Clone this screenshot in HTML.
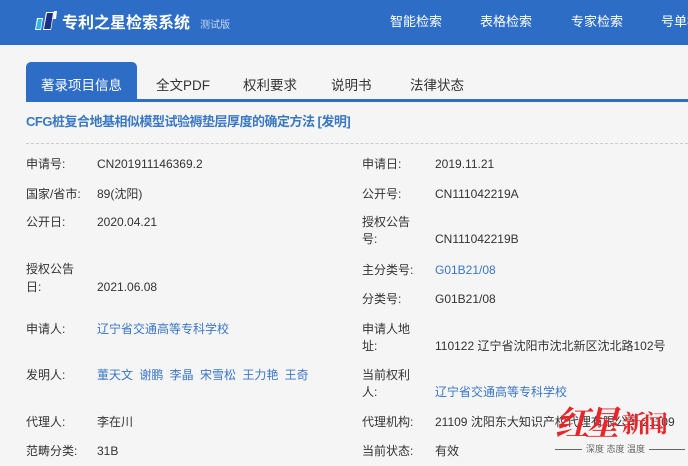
<!DOCTYPE html>
<html><head><meta charset="utf-8"><style>
body{margin:0;width:688px;height:466px;overflow:hidden;background:#f5f5f5;font-family:"Liberation Sans","Noto Sans CJK SC",sans-serif;position:relative;}
.hd{position:absolute;left:0;top:0;width:688px;height:45px;background:#2d6dc6;}
.a{position:absolute;font-size:12px;color:#333;white-space:nowrap;line-height:14px;}
.b{color:#3a76c6;}
.nav{position:absolute;top:11px;color:#fff;font-size:13px;white-space:nowrap;}
.tab{position:absolute;top:74px;font-size:13.5px;color:#333;white-space:nowrap;}
</style></head><body>
<div class="hd"></div>
<svg style="position:absolute;left:34px;top:9px" width="24" height="24" viewBox="0 0 24 24">
<polygon points="3,9 9,9 7,21 1,21" fill="#fff"/><polygon points="4,10 8,10 6.5,20 2,20" fill="#2bb6e8"/>
<polygon points="12,3 20,3 17,21 9,21" fill="#fff"/><polygon points="13,4 19,4 16.5,20 10,20" fill="#1a2f8a"/>
<polygon points="20,2 23,2 22,10 19,10" fill="#fff"/>
</svg>
<div style="position:absolute;left:62px;top:9px;color:#fff;font-size:16px;font-weight:bold;white-space:nowrap;">专利之星检索系统</div>
<div style="position:absolute;left:200px;top:16px;color:#c8d8f0;font-size:10px;">测试版</div>
<div class="nav" style="left:390px">智能检索</div>
<div class="nav" style="left:480px">表格检索</div>
<div class="nav" style="left:571px">专家检索</div>
<div class="nav" style="left:661px">号单检索</div>
<div style="position:absolute;left:26px;top:62px;width:111px;height:38px;background:#2d6dc6;border-radius:5px 5px 0 0;"></div>
<div style="position:absolute;left:26px;top:99px;width:662px;height:3px;background:#2d6dc6;"></div>
<div class="tab" style="left:41px;color:#fff">著录项目信息</div>
<div class="tab" style="left:156px">全文PDF</div>
<div class="tab" style="left:243px">权利要求</div>
<div class="tab" style="left:331px">说明书</div>
<div class="tab" style="left:410px">法律状态</div>
<div style="position:absolute;left:26px;top:111px;font-size:13px;color:#3a78c3;font-weight:bold;letter-spacing:-0.5px;white-space:nowrap">CFG桩复合地基相似模型试验褥垫层厚度的确定方法 [发明]</div>
<div style="position:absolute;left:26px;top:143px;width:662px;border-top:1px dashed #ccc;"></div>

<div class="a" style="left:26px;top:157px">申请号:</div><div class="a" style="left:97px;top:157px">CN201911146369.2</div>
<div class="a" style="left:26px;top:187px">国家/省市:</div><div class="a" style="left:97px;top:187px">89(沈阳)</div>
<div class="a" style="left:26px;top:215px">公开日:</div><div class="a" style="left:97px;top:215px">2020.04.21</div>
<div class="a" style="left:26px;top:262px">授权公告</div><div class="a" style="left:26px;top:280px">日:</div><div class="a" style="left:97px;top:280px">2021.06.08</div>
<div class="a" style="left:26px;top:322px">申请人:</div><div class="a b" style="left:97px;top:322px">辽宁省交通高等专科学校</div>
<div class="a" style="left:26px;top:368px">发明人:</div><div class="a b" style="left:97px;top:368px;word-spacing:3px">董天文 谢鹏 李晶 宋雪松 王力艳 王奇</div>
<div class="a" style="left:26px;top:415px">代理人:</div><div class="a" style="left:97px;top:415px">李在川</div>
<div class="a" style="left:26px;top:444px">范畴分类:</div><div class="a" style="left:97px;top:444px">31B</div>

<div class="a" style="left:362px;top:157px">申请日:</div><div class="a" style="left:435px;top:157px">2019.11.21</div>
<div class="a" style="left:362px;top:187px">公开号:</div><div class="a" style="left:435px;top:187px">CN111042219A</div>
<div class="a" style="left:362px;top:215px">授权公告</div><div class="a" style="left:362px;top:232px">号:</div><div class="a" style="left:435px;top:232px">CN111042219B</div>
<div class="a" style="left:362px;top:263px">主分类号:</div><div class="a b" style="left:435px;top:263px">G01B21/08</div>
<div class="a" style="left:362px;top:292px">分类号:</div><div class="a" style="left:435px;top:292px">G01B21/08</div>
<div class="a" style="left:362px;top:322px">申请人地</div><div class="a" style="left:362px;top:339px">址:</div><div class="a" style="left:435px;top:339px">110122 辽宁省沈阳市沈北新区沈北路102号</div>
<div class="a" style="left:362px;top:368px">当前权利</div><div class="a" style="left:362px;top:385px">人:</div><div class="a b" style="left:435px;top:385px">辽宁省交通高等专科学校</div>
<div class="a" style="left:362px;top:415px">代理机构:</div><div class="a" style="left:435px;top:415px">21109 沈阳东大知识产权代理有限公司 21109</div>
<div class="a" style="left:362px;top:444px">当前状态:</div><div class="a" style="left:435px;top:444px">有效</div>

<div style="position:absolute;left:555px;top:396px;font-size:34px;color:#e8262a;font-weight:bold;font-style:italic;font-family:'Noto Serif CJK SC',serif;letter-spacing:-4px;white-space:nowrap">红星</div>
<div style="position:absolute;left:622px;top:404px;font-size:24px;color:#e8262a;font-weight:bold;font-family:'Noto Serif CJK SC',serif;letter-spacing:-2px;white-space:nowrap">新闻</div>
<div style="position:absolute;left:555px;top:449px;width:130px;border-top:1px solid #666;"></div>
<div style="position:absolute;left:582px;top:442px;font-size:9px;color:#666;background:#f5f5f5;padding:0 4px;white-space:nowrap">深度 态度 温度</div>
</body></html>
